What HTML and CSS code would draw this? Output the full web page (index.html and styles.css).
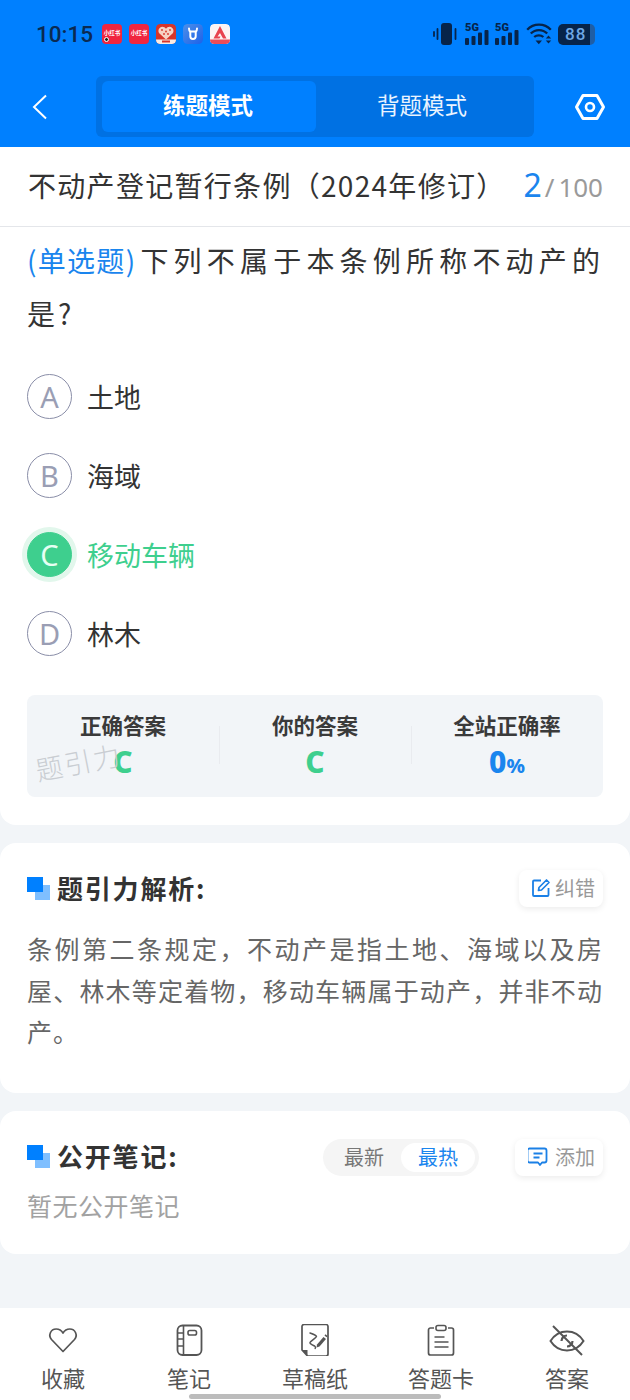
FILE: index.html
```html
<!DOCTYPE html>
<html lang="zh-CN">
<head>
<meta charset="utf-8">
<title>练题模式</title>
<link rel="stylesheet" href="styles.css">
</head>
<body>
<div class="app">
  <header class="top">
    <div class="status">
      <span class="time">10:15</span>
      <div class="apps">
        <span class="app-ico red"><span class="mini">小红书</span><i class="dot"></i></span>
        <span class="app-ico red"><span class="mini">小红书</span></span>
        <span class="app-ico heart">
          <svg viewBox="0 0 20 20" width="20" height="20"><rect width="20" height="20" rx="4" fill="#d8352a"/><path d="M10 15.500 3.200 9.200C1.400 6.800 3.200 2.800 6.300 2.800c1.600 0 2.900.8 3.700 2 .8-1.200 2.100-2 3.700-2 3.100 0 4.900 4 3.100 6.400z" fill="#f6d3c4"/><g fill="#d8352a"><circle cx="6" cy="6" r=".9"/><circle cx="10" cy="7.500" r=".9"/><circle cx="14" cy="6" r=".9"/><circle cx="8" cy="10" r=".9"/><circle cx="12" cy="10" r=".9"/></g><path d="M0 15.500h20V16a4 4 0 0 1-4 4H4a4 4 0 0 1-4-4z" fill="#f9ebe3"/><rect x="6" y="16.500" width="8" height="2" fill="#d8352a"/></svg>
        </span>
        <span class="app-ico">
          <svg viewBox="0 0 20 20" width="20" height="20"><defs><linearGradient id="ub" x1="0" y1="0" x2="1" y2="1"><stop offset="0" stop-color="#4d8fe8"/><stop offset="1" stop-color="#1c62ea"/></linearGradient></defs><rect width="20" height="20" rx="4.500" fill="url(#ub)"/><path d="M6 4.500c0 2 .8 2.800 1.300 3v4.800a2.700 2.700 0 0 0 5.400 0V7.500c.5-.2 1.300-1 1.300-3M6.800 7.500h6.400" fill="none" stroke="#fff" stroke-width="2" stroke-linecap="round"/></svg>
        </span>
        <span class="app-ico">
          <svg viewBox="0 0 20 20" width="20" height="20"><rect width="20" height="20" rx="4" fill="#fdf3f3"/><path d="M10 2 16.500 14.500h-3.500L10 9l-2.500 3.500 3 0-1 2H3.500z" fill="#e8434f"/><path d="M0 15.500h20V16a4 4 0 0 1-4 4H4a4 4 0 0 1-4-4z" fill="#ec4c58"/></svg>
        </span>
      </div>
      <div class="sys">
        <svg class="vib" viewBox="0 0 26 22" width="26" height="22"><rect x="8" y="0" width="11" height="22" rx="3" fill="#07244a"/><path d="M4.500 6v10M22.500 6v10M1 9v4" stroke="#07244a" stroke-width="1.800" stroke-linecap="round"/></svg>
        <span class="sig"><b>5G</b><svg viewBox="0 0 24 15" width="24" height="15"><g fill="#07244a"><rect x="0" y="8" width="4" height="7" rx="1"/><rect x="6.500" y="6" width="4" height="9" rx="1"/><rect x="13" y="2.500" width="4" height="12.500" rx="1"/><rect x="19.500" y="0" width="4" height="15" rx="1"/></g></svg></span>
        <span class="sig"><b>5G</b><svg viewBox="0 0 24 15" width="24" height="15"><g fill="#07244a"><rect x="0" y="8" width="4" height="7" rx="1"/><rect x="6.500" y="6" width="4" height="9" rx="1"/><rect x="13" y="2.500" width="4" height="12.500" rx="1"/><rect x="19.500" y="0" width="4" height="15" rx="1"/></g></svg></span>
        <svg class="wifi" viewBox="0 0 26 22" width="26" height="22"><path d="M1.200 6.800C7.500 0 18.500 0 24.800 6.800M4.800 10.500c4.500-4.600 11.900-4.600 16.400 0M8.200 14c2.600-2.300 6.600-2.300 9.200 0" fill="none" stroke="#07244a" stroke-width="2.300"/><path d="M9.500 17.500h6.500l-3.200 3.800z" fill="#07244a"/><path d="M19.800 15.500l2.700-3 2.700 3zM19.800 17.500l2.700 3 2.700-3z" fill="#07244a"/></svg>
        <span class="batt"><span class="batt-n">88</span></span>
      </div>
    </div>
    <nav class="nav">
      <svg class="back" viewBox="0 0 16 26" width="16" height="26"><path d="M14 1.500 2 13l12 11.500" fill="none" stroke="#fff" stroke-width="2"/></svg>
      <div class="tabs">
        <span class="tab on">练题模式</span>
        <span class="tab">背题模式</span>
      </div>
      <svg class="gear" viewBox="0 0 32 28" width="32" height="28"><path d="M9 2.500h14L29.500 14 23 25.500H9L2.500 14z" fill="none" stroke="#fff" stroke-width="3" stroke-linejoin="round"/><circle cx="16" cy="14" r="4" fill="none" stroke="#fff" stroke-width="2.600"/></svg>
    </nav>
  </header>

  <section class="card main">
    <div class="title-row">
      <h1 class="title">不动产登记暂行条例（2024年修订）</h1>
      <span class="count"><em>2</em><i>/</i>100</span>
    </div>
    <p class="question"><span class="qtype">(单选题)</span>下列不属于本条例所称不动产的是?</p>
    <ul class="options">
      <li class="opt"><span class="letter">A</span>土地</li>
      <li class="opt"><span class="letter">B</span>海域</li>
      <li class="opt right"><span class="letter">C</span>移动车辆</li>
      <li class="opt"><span class="letter">D</span>林木</li>
    </ul>
    <div class="stats">
      <div class="stat"><strong>正确答案</strong><span class="val green">C</span></div>
      <div class="stat"><strong>你的答案</strong><span class="val green">C</span></div>
      <div class="stat"><strong>全站正确率</strong><span class="val blue">0<small>%</small></span></div>
      <span class="mark">题引力</span>
    </div>
  </section>

  <section class="card analysis">
    <div class="head">
      <span class="squares"></span>
      <h2 class="h">题引力解析:</h2>
      <span class="pill">
        <svg viewBox="0 0 20 20" width="20" height="20"><path d="M10 2.500H3a1 1 0 0 0-1 1V17a1 1 0 0 0 1 1h13.500a1 1 0 0 0 1-1v-7" fill="none" stroke="#1b80e6" stroke-width="1.800"/><path d="M7.500 12.500l.5-3L15.500 2l2.500 2.500L10.500 12z" fill="none" stroke="#1b80e6" stroke-width="1.700" stroke-linejoin="round"/></svg>
        纠错
      </span>
    </div>
    <p class="body">条例第二条规定，不动产是指土地、海域以及房屋、林木等定着物，移动车辆属于动产，并非不动产。</p>
  </section>

  <section class="card notes">
    <div class="head">
      <span class="squares"></span>
      <h2 class="h">公开笔记:</h2>
      <div class="seg"><span class="seg-i">最新</span><span class="seg-i on">最热</span></div>
      <span class="pill add">
        <svg viewBox="0 0 20 20" width="20" height="20"><path d="M3.500 1.500h13a2 2 0 0 1 2 2v10a2 2 0 0 1-2 2h-2.500l-2 2.500-2-2.500h-8.500a2 2 0 0 1-2-2v-10a2 2 0 0 1 2-2z" fill="none" stroke="#1b80e6" stroke-width="1.800" stroke-linejoin="round"/><path d="M5.500 6.500h9M5.500 10.500h6" stroke="#1b80e6" stroke-width="1.800"/></svg>
        添加
      </span>
    </div>
    <p class="empty">暂无公开笔记</p>
  </section>

  <footer class="bar">
    <div class="bar-i">
      <svg viewBox="0 0 32 32" width="32" height="32"><path d="M16 27.500 4.500 15.500C1 11.500 3.500 5 9.200 5c2.800 0 5.300 1.500 6.800 4 1.500-2.500 4-4 6.800-4C28.500 5 31 11.500 27.500 15.500z" fill="none" stroke="#555" stroke-width="1.700" stroke-linejoin="round"/></svg>
      <span>收藏</span>
    </div>
    <div class="bar-i">
      <svg viewBox="0 0 32 32" width="32" height="32"><rect x="4.500" y="1.500" width="24" height="29.500" rx="5" fill="none" stroke="#555" stroke-width="1.800"/><path d="M10.500 2v29M4.500 9h6M4.500 15h6M4.500 22h6" stroke="#555" stroke-width="1.600"/><rect x="15" y="6.500" width="8.500" height="4.500" rx="1.800" fill="none" stroke="#555" stroke-width="1.600"/></svg>
      <span>笔记</span>
    </div>
    <div class="bar-i">
      <svg viewBox="0 0 32 32" width="32" height="32"><path d="M8.500 32H27a2 2 0 0 0 2-2V2.500a2 2 0 0 0-2-2H5a2 2 0 0 0-2 2V26z" fill="none" stroke="#555" stroke-width="1.700" stroke-linejoin="round"/><path d="M3 26h5.500v6z" fill="#555"/><path d="M11 9c3 1 6 2 6.500 3.500.3 1-5.500 4-6.500 6-.6 1.400 3.500 3 5 3.800.5.300.5 1.500.2 2.200" fill="none" stroke="#555" stroke-width="1.500" stroke-linecap="round"/><path d="M18 20.500l6.500-7.500 2.500 2-6.500 7.500-3 1z" fill="#555"/><path d="M25.500 11.500l1-1.200 2 1.700-1 1.200z" fill="#555"/></svg>
      <span>草稿纸</span>
    </div>
    <div class="bar-i">
      <svg viewBox="0 0 32 32" width="32" height="32"><path d="M9 4H5.500a2 2 0 0 0-2 2v23a2 2 0 0 0 2 2h21a2 2 0 0 0 2-2V6a2 2 0 0 0-2-2H23" fill="none" stroke="#555" stroke-width="1.700"/><rect x="11" y="1.500" width="10" height="5" rx="2" fill="none" stroke="#555" stroke-width="1.600"/><path d="M9.500 13h10M9.500 18h14M9.500 23h14" stroke="#555" stroke-width="1.700"/></svg>
      <span>答题卡</span>
    </div>
    <div class="bar-i">
      <svg viewBox="0 0 36 32" width="36" height="32"><path d="M1.500 17c3.800-6 10-9.500 16.500-9.500s12.700 3.500 16.500 9.500c-3.800 6-10 9.500-16.500 9.500S5.300 23 1.500 17z" fill="none" stroke="#555" stroke-width="2"/><path d="M12.500 17a5.500 5.500 0 0 1 5.500-5.500M23.500 17a5.500 5.500 0 0 1-5.500 5.500" fill="none" stroke="#555" stroke-width="2.200"/><path d="M4 2l29 29" stroke="#555" stroke-width="2"/></svg>
      <span>答案</span>
    </div>
    <span class="home"></span>
  </footer>
</div>
</body>
</html>
```
FILE: styles.css
```css
* { box-sizing: border-box; }
html, body { margin: 0; padding: 0; }
body {
  width: 630px;
  height: 1400px;
  overflow: hidden;
  background: #f2f5f8;
  font-family: "Noto Sans CJK SC", "Noto Sans", sans-serif;
  color: #333;
}
.app { display: flex; flex-direction: column; height: 1400px; position: relative; }
h1, h2, p, ul { margin: 0; padding: 0; }
ul { list-style: none; }
em, i { font-style: normal; }

.top { background: #0080ff; height: 147px; flex: none; }
.status { height: 76px; display: flex; align-items: center; padding: 0 35px 8px 36px; color: #07244a; }
.time { font-family: Roboto, sans-serif; font-size: 22.500px; font-weight: 500; color: #0b2a52; width: 65px; }
.apps { display: flex; gap: 7px; margin-left: 1px; }
.app-ico { width: 20px; height: 20px; border-radius: 4px; display: flex; align-items: center; justify-content: center; position: relative; overflow: hidden; }
.app-ico svg { display: block; }
.red { background: #f0263f; }
.mini { font-size: 5.500px; color: #fff; font-weight: 700; white-space: nowrap; line-height: 1; }
.dot { position: absolute; left: 2px; top: 13px; width: 5px; height: 5px; background: #222; border: 1px solid #fff; border-radius: 50%; }
.sys { margin-left: auto; display: flex; align-items: center; gap: 6px; }
.sig { position: relative; display: block; width: 24px; height: 22px; }
.sig svg { position: absolute; left: 0; bottom: 0; }
.sig b { position: absolute; left: 0; top: -1px; font-family: Roboto, sans-serif; font-size: 11px; font-weight: 900; line-height: 11px; color: #07244a; }
.wifi { margin-left: 1px; }
.batt { width: 37px; height: 21px; background: linear-gradient(90deg, #07244a 86%, #1f5ea5 86%); border-radius: 5px; display: flex; align-items: center; padding-left: 7px; }
.batt-n { font-family: Roboto, sans-serif; font-size: 17px; font-weight: 500; color: #6fa8e6; letter-spacing: 1px; line-height: 1; }

.nav { display: flex; align-items: center; height: 61px; padding-left: 32px; padding-right: 24px; }
.back { flex: none; }
.tabs { margin-left: 48px; width: 438px; height: 61px; background: #0071e3; border-radius: 6px; display: flex; padding: 5px 0 5px 6px; }
.tab { flex: none; width: 214px; padding: 0 2px 4px 0; display: flex; align-items: center; justify-content: center; color: #eaf4ff; font-size: 22.500px; line-height: 1; }
.tab.on { background: #0080ff; border-radius: 6px; color: #fff; font-weight: 700; }
.gear { margin-left: auto; flex: none; }

.card { background: #fff; border-radius: 16px; flex: none; }
.main { border-radius: 0 0 16px 16px; height: 678px; padding: 0 27px; }
.title-row { height: 80px; margin: 0 -27px; padding: 0 27px 4px 28px; display: flex; align-items: center; border-bottom: 1px solid #e4e6ea; }
.title { font-size: 28px; font-weight: 400; color: #333; line-height: 1; white-space: nowrap; flex: none; letter-spacing: 1.300px; }
.count { margin-left: auto; font-size: 26px; color: #9a9a9a; font-family: "Noto Sans", sans-serif; line-height: 1; display: flex; align-items: baseline; }
.count em { color: #1a85ee; font-size: 32px; }
.count i { margin: 0 4px 0 3px; }
.question { font-size: 28px; line-height: 53px; margin-top: 7px; text-align: justify; letter-spacing: 3px; color: #333; }
.qtype { color: #1a85ee; letter-spacing: -0.900px; margin-right: 4px; }
.options { margin-top: 17px; display: flex; flex-direction: column; }
.opt { height: 79px; display: flex; align-items: center; font-size: 27px; color: #333; }
.letter { width: 45px; height: 45px; flex: none; border: 1px solid #8a8ea8; border-radius: 50%; margin: 0 15px 0 0; display: flex; align-items: center; justify-content: center; color: #9a9eb4; font-size: 29px; font-weight: 400; font-family: "Noto Sans", sans-serif; line-height: 1; }
.opt.right { color: #3ecf8e; }
.right .letter { background: #3ecf8e; border-color: #3ecf8e; color: #e6fff3; box-shadow: 0 0 0 5px #e2f7ec; }
.stats { margin-top: 22px; height: 102px; border-radius: 8px; background: #f2f5f8; display: flex; padding-top: 15px; position: relative; }
.stat { flex: 1; display: flex; flex-direction: column; align-items: center; position: relative; }
.stat + .stat::before { content: ""; position: absolute; left: 0; top: 16px; height: 38px; border-left: 1px solid #e9ebef; }
.stat strong { font-size: 21.500px; line-height: 29px; font-weight: 700; color: #3a3a3a; }
.val { font-family: "Noto Sans", sans-serif; font-weight: 800; font-size: 30px; line-height: 34px; margin-top: 6px; }
.val small { font-size: 20px; }
.green { color: #3ecf8e; }
.blue { color: #1a85ee; }
.mark { position: absolute; left: 8px; top: 53px; font-size: 27px; line-height: 1; color: #c9cdd2; letter-spacing: 2px; transform: rotate(-11deg); font-weight: 300; }

.analysis { margin-top: 18px; height: 250px; padding: 25px 27px 0 27px; }
.notes { margin-top: 18px; height: 143px; padding: 25px 27px 0 27px; }
.head { display: flex; align-items: center; height: 40px; }
.squares { width: 23px; height: 23px; flex: none; position: relative; margin-right: 7px; }
.squares::before { content: ""; position: absolute; right: 0; bottom: 0; width: 15px; height: 15px; background: #7fbfff; }
.squares::after { content: ""; position: absolute; left: 0; top: 0; width: 16px; height: 15px; background: #0080ff; }
.h { font-size: 26px; font-weight: 700; color: #333; line-height: 1; letter-spacing: 1.800px; }
.pill { margin-left: auto; height: 37px; border-radius: 8px; background: #fff; box-shadow: 0 2px 6px rgba(0,0,0,.08); padding: 0 8px 0 12px; display: flex; align-items: center; gap: 4px; color: #999; font-size: 20px; line-height: 1; }
.body { margin-top: 20px; font-size: 25px; line-height: 41.500px; color: #666; letter-spacing: 1px; text-align: justify; }
.seg { margin-left: auto; margin-top: 2px; width: 156px; height: 37px; border-radius: 19px; background: #f5f5f5; display: flex; align-items: center; padding: 0 4px 0 4px; }
.seg-i { flex: 1; height: 29px; display: flex; align-items: center; justify-content: center; font-size: 20px; color: #777; border-radius: 15px; line-height: 1; }
.seg-i.on { background: #fff; color: #1a85ee; }
.pill.add { margin-left: 36px; margin-top: 2px; padding-left: 13px; gap: 7px; }
.notes .head { height: 36px; margin-top: 2px; }
.empty { margin-top: 14px; font-size: 25px; line-height: 34px; color: #a2a2a2; letter-spacing: 0.500px; }

.bar { position: absolute; left: 0; bottom: 0; right: 0; height: 92px; background: #fff; display: flex; padding: 16px 0 0 0; }
.bar-i { flex: 1; display: flex; flex-direction: column; align-items: center; color: #555; }
.bar-i svg { display: block; }
.bar-i span { font-size: 22px; line-height: 30px; margin-top: 6px; color: #555; }
.home { position: absolute; left: 189px; bottom: 1px; width: 252px; height: 5px; border-radius: 3px; background: #bcbcbc; }
```
